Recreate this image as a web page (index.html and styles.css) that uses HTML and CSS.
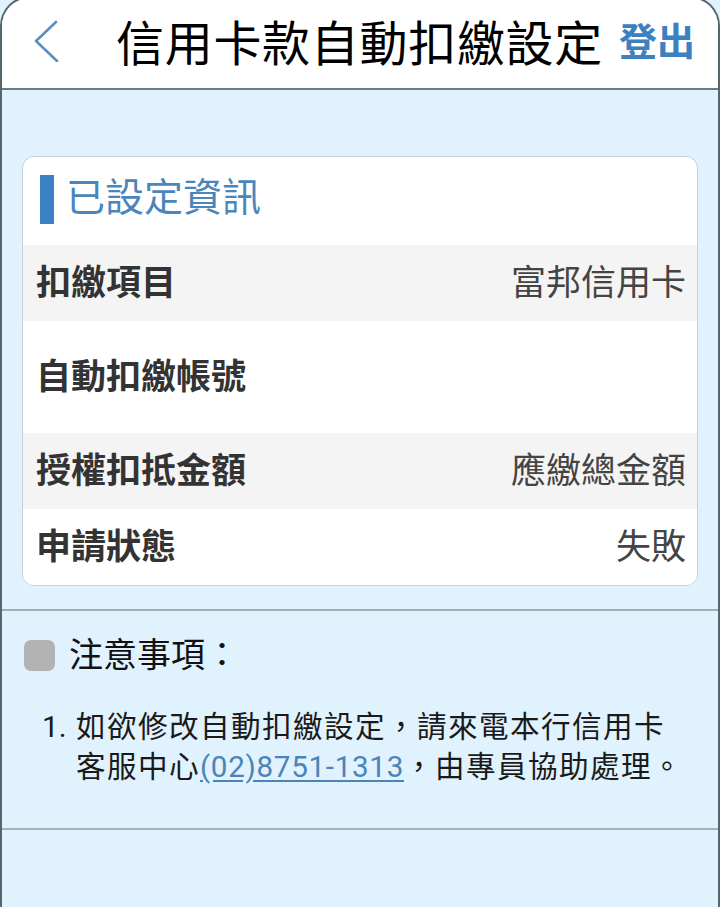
FILE: index.html
```html
<!DOCTYPE html>
<html lang="zh-Hant">
<head>
<meta charset="utf-8">
<title>信用卡款自動扣繳設定</title>
<link rel="stylesheet" href="styles.css">
</head>
<body>
<div class="frame">
  <header class="topbar">
    <svg class="back" width="26" height="42" viewBox="0 0 26 42" aria-hidden="true">
      <polyline points="22,2 2,21 23,41" fill="none" stroke="#5a8fc2" stroke-width="2.6" stroke-linecap="round" stroke-linejoin="round"/>
    </svg>
    <h1 class="title">信用卡款自動扣繳設定</h1>
    <a class="logout">登出</a>
  </header>

  <main class="content">
    <section class="card">
      <div class="card-head">
        <span class="bar"></span>
        <h2 class="card-title">已設定資訊</h2>
      </div>
      <div class="row alt">
        <span class="label">扣繳項目</span>
        <span class="value">富邦信用卡</span>
      </div>
      <div class="row tall">
        <span class="label">自動扣繳帳號</span>
        <span class="value"></span>
      </div>
      <div class="row alt">
        <span class="label">授權扣抵金額</span>
        <span class="value">應繳總金額</span>
      </div>
      <div class="row">
        <span class="label">申請狀態</span>
        <span class="value">失敗</span>
      </div>
    </section>

    <section class="notes">
      <div class="notes-head">
        <span class="square"></span>
        <h3 class="notes-title">注意事項：</h3>
      </div>
      <ol class="note-list">
        <li><span class="num">1.</span><span class="txt">如欲修改自動扣繳設定，請來電本行信用卡<br>客服中心<a class="tel">(02)8751-1313</a>，由專員協助處理。</span></li>
      </ol>
    </section>
  </main>
</div>
</body>
</html>
```

FILE: styles.css
```css
* { box-sizing: border-box; }

html, body {
  margin: 0;
  padding: 0;
  background: #e0f2fd;
  font-family: Roboto, "Noto Sans CJK TC", "Noto Sans", sans-serif;
  overflow: hidden;
}

.frame {
  margin-top: -4px;
  height: 911px;
  border: 2px solid #56666c;
  border-bottom: none;
  border-radius: 30px 30px 0 0;
  background: #e0f2fd;
  overflow: hidden;
}

.topbar {
  display: flex;
  align-items: center;
  height: 92px;
  padding-top: 4px;
  background: #ffffff;
  border-bottom: 2px solid #6c7c85;
  padding-left: 32px;
  padding-right: 23px;
}

.back {
  display: block;
  flex: none;
  margin-top: -8px;
}

.title {
  margin: 0 0 0 56px;
  font-size: 48px;
  font-weight: 400;
  color: #000;
  line-height: 1;
  white-space: nowrap;
  letter-spacing: 0.7px;
}

.logout {
  margin-left: auto;
  font-size: 38px;
  font-weight: 700;
  color: #3d80bf;
  line-height: 1;
  white-space: nowrap;
  margin-top: -6px;
}

.content {
  padding-top: 66px;
}

.card {
  margin: 0 20px;
  background: #ffffff;
  border: 1px solid #c7d0d6;
  border-radius: 12px;
  overflow: hidden;
}

.card-head {
  display: flex;
  align-items: center;
  height: 88px;
  padding-left: 17px;
}

.bar {
  width: 14px;
  height: 49px;
  background: #3b80c5;
  flex: none;
  margin-top: -4px;
}

.card-title {
  margin: 0 0 0 12px;
  font-size: 39px;
  font-weight: 400;
  color: #4a86bb;
  line-height: 1;
  margin-top: -6px;
}

.row {
  display: flex;
  align-items: center;
  justify-content: space-between;
  height: 76px;
  padding: 0 11px 0 13px;
  background: #ffffff;
}

.row.alt { background: #f4f4f4; }
.row.tall { height: 112px; }

.label {
  font-size: 35px;
  font-weight: 700;
  color: #333333;
  line-height: 1;
}

.value {
  font-size: 35px;
  font-weight: 400;
  color: #444444;
  line-height: 1;
}

.notes {
  margin-top: 23px;
  border-top: 2px solid #a3adb2;
  border-bottom: 2px solid #a8b1b5;
  padding: 24px 0 41px 22px;
}

.notes-head {
  display: flex;
  align-items: center;
  height: 40px;
}

.square {
  width: 31px;
  height: 31px;
  background: #b3b3b3;
  border-radius: 7px;
  flex: none;
}

.notes-title {
  margin: 0 0 0 14px;
  font-size: 34px;
  font-weight: 400;
  color: #111111;
  line-height: 40px;
}

.note-list {
  list-style: none;
  margin: 32px 0 0 0;
  padding: 0 0 0 18px;
}

.note-list li {
  display: flex;
  font-size: 29.6px;
  line-height: 40px;
  color: #1a1a1a;
  letter-spacing: 1.4px;
}

.num {
  flex: none;
  width: 34px;
  letter-spacing: 0;
}

.txt {
  white-space: nowrap;
}

.tel {
  color: #4a84b8;
  text-decoration: underline;
  text-underline-offset: 3px;
  letter-spacing: 0.7px;
}
```
